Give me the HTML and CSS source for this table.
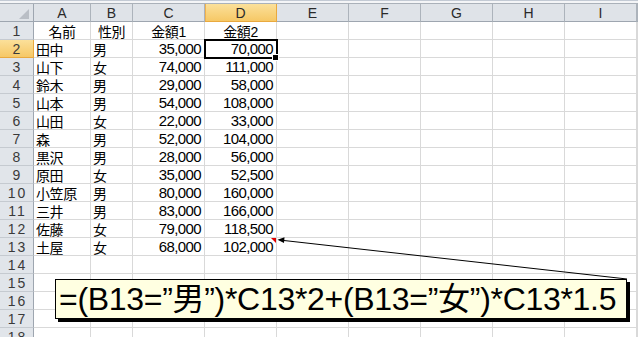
FILE: index.html
```html
<!DOCTYPE html>
<html lang="ja">
<head>
<meta charset="utf-8">
<title>Excel</title>
<link rel="stylesheet" href="styles.css">
</head>
<body>
<div class="page">
  <div class="topbar"></div>
  <div class="sheet">
    <div class="corner"><svg width="10" height="10" viewBox="0 0 10 10"><polygon points="10,0 10,10 0,10" fill="#b9bec5"/></svg></div>
    <div class="ch">A</div><div class="ch">B</div><div class="ch">C</div><div class="ch sel">D</div><div class="ch">E</div><div class="ch">F</div><div class="ch">G</div><div class="ch">H</div><div class="ch">I</div><div class="ch"></div>

    <div class="rh">1</div><div class="c t ctr">名前</div><div class="c t ctr">性別</div><div class="c t ctr">金額1</div><div class="c t ctr">金額2</div><div class="c"></div><div class="c"></div><div class="c"></div><div class="c"></div><div class="c"></div><div class="c"></div>

    <div class="rh rsel">2</div><div class="c t">田中</div><div class="c t">男</div><div class="c num">35,000</div><div class="c num act">70,000</div><div class="c"></div><div class="c"></div><div class="c"></div><div class="c"></div><div class="c"></div><div class="c"></div>

    <div class="rh">3</div><div class="c t">山下</div><div class="c t">女</div><div class="c num">74,000</div><div class="c num">111,000</div><div class="c"></div><div class="c"></div><div class="c"></div><div class="c"></div><div class="c"></div><div class="c"></div>

    <div class="rh">4</div><div class="c t">鈴木</div><div class="c t">男</div><div class="c num">29,000</div><div class="c num">58,000</div><div class="c"></div><div class="c"></div><div class="c"></div><div class="c"></div><div class="c"></div><div class="c"></div>

    <div class="rh">5</div><div class="c t">山本</div><div class="c t">男</div><div class="c num">54,000</div><div class="c num">108,000</div><div class="c"></div><div class="c"></div><div class="c"></div><div class="c"></div><div class="c"></div><div class="c"></div>

    <div class="rh">6</div><div class="c t">山田</div><div class="c t">女</div><div class="c num">22,000</div><div class="c num">33,000</div><div class="c"></div><div class="c"></div><div class="c"></div><div class="c"></div><div class="c"></div><div class="c"></div>

    <div class="rh">7</div><div class="c t">森</div><div class="c t">男</div><div class="c num">52,000</div><div class="c num">104,000</div><div class="c"></div><div class="c"></div><div class="c"></div><div class="c"></div><div class="c"></div><div class="c"></div>

    <div class="rh">8</div><div class="c t">黒沢</div><div class="c t">男</div><div class="c num">28,000</div><div class="c num">56,000</div><div class="c"></div><div class="c"></div><div class="c"></div><div class="c"></div><div class="c"></div><div class="c"></div>

    <div class="rh">9</div><div class="c t">原田</div><div class="c t">女</div><div class="c num">35,000</div><div class="c num">52,500</div><div class="c"></div><div class="c"></div><div class="c"></div><div class="c"></div><div class="c"></div><div class="c"></div>

    <div class="rh">10</div><div class="c t">小笠原</div><div class="c t">男</div><div class="c num">80,000</div><div class="c num">160,000</div><div class="c"></div><div class="c"></div><div class="c"></div><div class="c"></div><div class="c"></div><div class="c"></div>

    <div class="rh">11</div><div class="c t">三井</div><div class="c t">男</div><div class="c num">83,000</div><div class="c num">166,000</div><div class="c"></div><div class="c"></div><div class="c"></div><div class="c"></div><div class="c"></div><div class="c"></div>

    <div class="rh">12</div><div class="c t">佐藤</div><div class="c t">女</div><div class="c num">79,000</div><div class="c num">118,500</div><div class="c"></div><div class="c"></div><div class="c"></div><div class="c"></div><div class="c"></div><div class="c"></div>

    <div class="rh">13</div><div class="c t">土屋</div><div class="c t">女</div><div class="c num">68,000</div><div class="c num note">102,000</div><div class="c"></div><div class="c"></div><div class="c"></div><div class="c"></div><div class="c"></div><div class="c"></div>

    <div class="rh">14</div><div class="c"></div><div class="c"></div><div class="c"></div><div class="c"></div><div class="c"></div><div class="c"></div><div class="c"></div><div class="c"></div><div class="c"></div><div class="c"></div>

    <div class="rh">15</div><div class="c"></div><div class="c"></div><div class="c"></div><div class="c"></div><div class="c"></div><div class="c"></div><div class="c"></div><div class="c"></div><div class="c"></div><div class="c"></div>

    <div class="rh">16</div><div class="c"></div><div class="c"></div><div class="c"></div><div class="c"></div><div class="c"></div><div class="c"></div><div class="c"></div><div class="c"></div><div class="c"></div><div class="c"></div>

    <div class="rh">17</div><div class="c"></div><div class="c"></div><div class="c"></div><div class="c"></div><div class="c"></div><div class="c"></div><div class="c"></div><div class="c"></div><div class="c"></div><div class="c"></div>

    <div class="rh">18</div><div class="c"></div><div class="c"></div><div class="c"></div><div class="c"></div><div class="c"></div><div class="c"></div><div class="c"></div><div class="c"></div><div class="c"></div><div class="c"></div>
  </div>

  <svg class="arrow" width="638" height="337" viewBox="0 0 638 337">
    <line x1="283" y1="240.4" x2="627" y2="279" stroke="#000" stroke-width="1"/>
    <polygon points="277.5,239.8 284.5,237.2 284,243" fill="#000"/>
  </svg>

  <div class="callout">=(B13=”男”)*C13*2+(B13=”女”)*C13*1.5</div>
</div>
</body>
</html>
```

FILE: styles.css
```css
html, body {
  margin: 0;
  padding: 0;
  background: #fff;
}

.page {
  position: relative;
  width: 638px;
  height: 337px;
  overflow: hidden;
  font-family: "Liberation Sans", "Noto Sans CJK JP", sans-serif;
}

.topbar {
  height: 2px;
  border-top: 1px solid #c3cad4;
  border-bottom: 1px solid #aab1b9;
  background: #f4f5f7;
}

.sheet {
  display: grid;
  grid-template-columns: 34px 57px 42px repeat(7, 72px) 1fr;
  grid-auto-rows: 18px;
}

.corner {
  background: #dfe3e8;
  border-right: 1px solid #9ea6b0;
  border-bottom: 1px solid #9ea6b0;
  display: flex;
  justify-content: flex-end;
  align-items: flex-end;
  padding: 0 4px 2px 0;
}

.ch {
  background: #dfe3e8;
  border-right: 1px solid #acb3bb;
  border-bottom: 1px solid #9ea6b0;
  text-align: center;
  font-size: 14px;
  line-height: 17px;
  padding-top: 1px;
  box-sizing: border-box;
  color: #2a2a2a;
}

.ch.sel {
  background: linear-gradient(#fbe09a, #f6c866);
  border-right-color: #e9a93e;
  border-bottom-color: #e9a93e;
  box-shadow: inset 1px 0 0 #f0b24e;
}

.rh {
  background: #e1e5ea;
  border-right: 1px solid #9ea6b0;
  border-bottom: 1px solid #c5cad0;
  text-align: center;
  font-size: 14px;
  line-height: 16px;
  padding-top: 1px;
  box-sizing: border-box;
  letter-spacing: 2px;
  padding-left: 2px;
  color: #3a3a3a;
}

.rh.rsel {
  background: linear-gradient(#fbe09a, #f6c866);
  border-bottom-color: #e9a93e;
  border-right-color: #e9a93e;
}

.c {
  position: relative;
  border-right: 1px solid #d9d9d9;
  border-bottom: 1px solid #d9d9d9;
  font-size: 15px;
  line-height: 17px;
  letter-spacing: -0.6px;
  white-space: nowrap;
  color: #000;
}

.t {
  font-size: 14px;
  line-height: 14px;
  padding-top: 3px;
  box-sizing: border-box;
  letter-spacing: -0.4px;
  padding-left: 2px;
}

.ctr {
  text-align: center;
  padding-left: 0;
}

.num {
  text-align: right;
  padding-right: 3px;
  padding-top: 1px;
  line-height: 16px;
  box-sizing: border-box;
}

.act {
  z-index: 1;
}

.act::before {
  content: "";
  position: absolute;
  left: -1px;
  top: -1px;
  right: -2px;
  bottom: -2px;
  border: 2px solid #000;
}

.act::after {
  content: "";
  position: absolute;
  right: -3px;
  bottom: -4px;
  width: 5px;
  height: 5px;
  background: #000;
  border: 1px solid #fff;
}

.note::after {
  content: "";
  position: absolute;
  top: 0;
  right: 0;
  width: 0;
  height: 0;
  border-top: 5px solid #e00000;
  border-left: 5px solid transparent;
}

.arrow {
  position: absolute;
  left: 0;
  top: 0;
  pointer-events: none;
}

.callout {
  position: absolute;
  left: 55px;
  top: 279px;
  width: 572px;
  height: 40px;
  box-sizing: border-box;
  border: 1px solid #000;
  background: #ffffe1;
  box-shadow: 3px 3px 0 #000;
  font-size: 32px;
  line-height: 38px;
  letter-spacing: -0.3px;
  padding-left: 3px;
  white-space: nowrap;
  color: #000;
}
```
